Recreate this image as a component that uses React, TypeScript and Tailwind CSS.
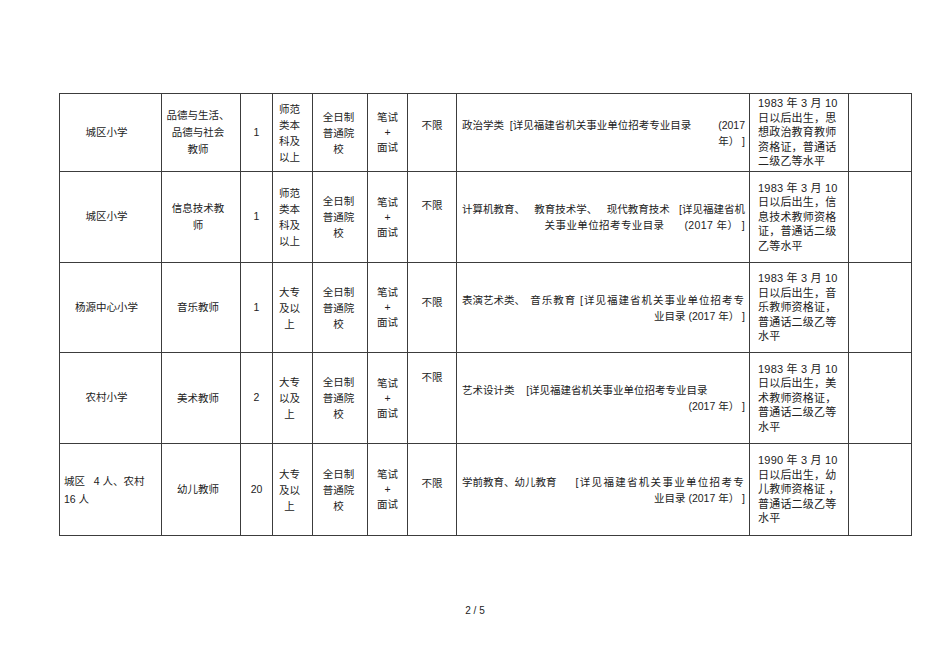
import React from "react";

type Row = {
  h: string;
  school: React.ReactNode;
  post: string[];
  num: string;
  edu: string[];
  form: string[];
  limitPt: string;
  major: React.ReactNode;
  note: string[];
};

const font = { fontFamily: '"Liberation Sans", "Noto Sans CJK SC", sans-serif' };

const cell = "border border-[#3c3c3c] align-middle";

function Lines({ lines, className }: { lines: string[]; className?: string }) {
  return (
    <div className={className}>
      {lines.map((l, i) => (
        <div key={i} className="whitespace-pre">{l}</div>
      ))}
    </div>
  );
}

const rows: Row[] = [
  {
    h: "h-[78px]",
    school: "城区小学",
    post: ["品德与生活、", "品德与社会", "教师"],
    num: "1",
    edu: ["师范", "类本", "科及", "以上"],
    form: ["笔试", "+", "面试"],
    limitPt: "pt-[24px]",
    major: (
      <>
        <div className="flex justify-between whitespace-pre">
          <span>政治学类  [详见福建省机关事业单位招考专业目录</span>
          <span>(2017</span>
        </div>
        <div className="text-right">年） ]</div>
      </>
    ),
    note: ["1983 年 3 月 10", "日以后出生，思", "想政治教育教师", "资格证，普通话", "二级乙等水平"],
  },
  {
    h: "h-[91px]",
    school: "城区小学",
    post: ["信息技术教", "师"],
    num: "1",
    edu: ["师范", "类本", "科及", "以上"],
    form: ["笔试", "+", "面试"],
    limitPt: "pt-[26px]",
    major: (
      <>
        <div className="flex justify-between whitespace-pre">
          <span>计算机教育、</span>
          <span>教育技术学、</span>
          <span>现代教育技术</span>
          <span>[详见福建省机</span>
        </div>
        <div className="text-right whitespace-pre tracking-[0.4px]">关事业单位招考专业目录      (2017 年） ]</div>
      </>
    ),
    note: ["1983 年 3 月 10", "日以后出生，信", "息技术教师资格", "证，普通话二级", "乙等水平"],
  },
  {
    h: "h-[90px]",
    school: "杨源中心小学",
    post: ["音乐教师"],
    num: "1",
    edu: ["大专", "及以", "上"],
    form: ["笔试", "+", "面试"],
    limitPt: "pt-[32px]",
    major: (
      <>
        <div className="flex justify-between whitespace-pre">
          <span>表演艺术类、</span>
          <span className="tracking-[1px]">音乐教育 [详见福建省机关事业单位招考专</span>
        </div>
        <div className="text-right">业目录 (2017 年） ]</div>
      </>
    ),
    note: ["1983 年 3 月 10", "日以后出生，音", "乐教师资格证，", "普通话二级乙等", "水平"],
  },
  {
    h: "h-[91px]",
    school: "农村小学",
    post: ["美术教师"],
    num: "2",
    edu: ["大专", "以及", "上"],
    form: ["笔试", "+", "面试"],
    limitPt: "pt-[17px]",
    major: (
      <>
        <div className="whitespace-pre">艺术设计类    [详见福建省机关事业单位招考专业目录</div>
        <div className="text-right">(2017 年） ]</div>
      </>
    ),
    note: ["1983 年 3 月 10", "日以后出生，美", "术教师资格证，", "普通话二级乙等", "水平"],
  },
  {
    h: "h-[92px]",
    school: (
      <div className="text-left pl-[4px] leading-[18px]">
        <div className="whitespace-pre">城区   4 人、农村</div>
        <div>16 人</div>
      </div>
    ),
    post: ["幼儿教师"],
    num: "20",
    edu: ["大专", "及以", "上"],
    form: ["笔试", "+", "面试"],
    limitPt: "pt-[32px]",
    major: (
      <>
        <div className="flex justify-between whitespace-pre">
          <span>学前教育、幼儿教育</span>
          <span className="tracking-[1.3px]">[详见福建省机关事业单位招考专</span>
        </div>
        <div className="text-right">业目录 (2017 年） ]</div>
      </>
    ),
    note: ["1990 年 3 月 10", "日以后出生，幼", "儿教师资格证 ，", "普通话二级乙等", "水平"],
  },
];

export default function App() {
  return (
    <div className="w-[950px] h-[672px] bg-white text-[#222] text-[10.5px]" style={font}>
      <div className="pt-[93px] pl-[59px]">
        <table className="table-fixed border-collapse w-[852px]">
          <colgroup>
            <col className="w-[102px]" />
            <col className="w-[79px]" />
            <col className="w-[32px]" />
            <col className="w-[40px]" />
            <col className="w-[55px]" />
            <col className="w-[40px]" />
            <col className="w-[49px]" />
            <col className="w-[293px]" />
            <col className="w-[99px]" />
            <col className="w-[63px]" />
          </colgroup>
          <tbody>
            {rows.map((r, i) => (
              <tr key={i} className={r.h}>
                <td className={`${cell} text-center pr-[8px]`}>{r.school}</td>
                <td className={`${cell} text-center pr-[6px]`}>
                  <Lines lines={r.post} className="leading-[17px]" />
                </td>
                <td className={`${cell} text-center`}>{r.num}</td>
                <td className={`${cell} text-center pr-[6px]`}>
                  <Lines lines={r.edu} className="leading-[16px]" />
                </td>
                <td className={`${cell} text-center pr-[3px]`}>
                  <Lines lines={["全日制", "普通院", "校"]} className="leading-[16px]" />
                </td>
                <td className={`${cell} text-center`}>
                  <Lines lines={r.form} className="leading-[15px]" />
                </td>
                <td className={`border border-[#3c3c3c] align-top text-center ${r.limitPt}`}>不限</td>
                <td className={`${cell} pl-[5px] pr-[4px] leading-[16px]`}>{r.major}</td>
                <td className={`${cell} pl-[8px]`}>
                  <Lines lines={r.note} className="leading-[14.5px] text-[11px] tracking-[0.2px]" />
                </td>
                <td className={cell}></td>
              </tr>
            ))}
          </tbody>
        </table>
      </div>
      <div className="mt-[69px] text-center text-[10px] leading-[12px]">2 / 5</div>
    </div>
  );
}
